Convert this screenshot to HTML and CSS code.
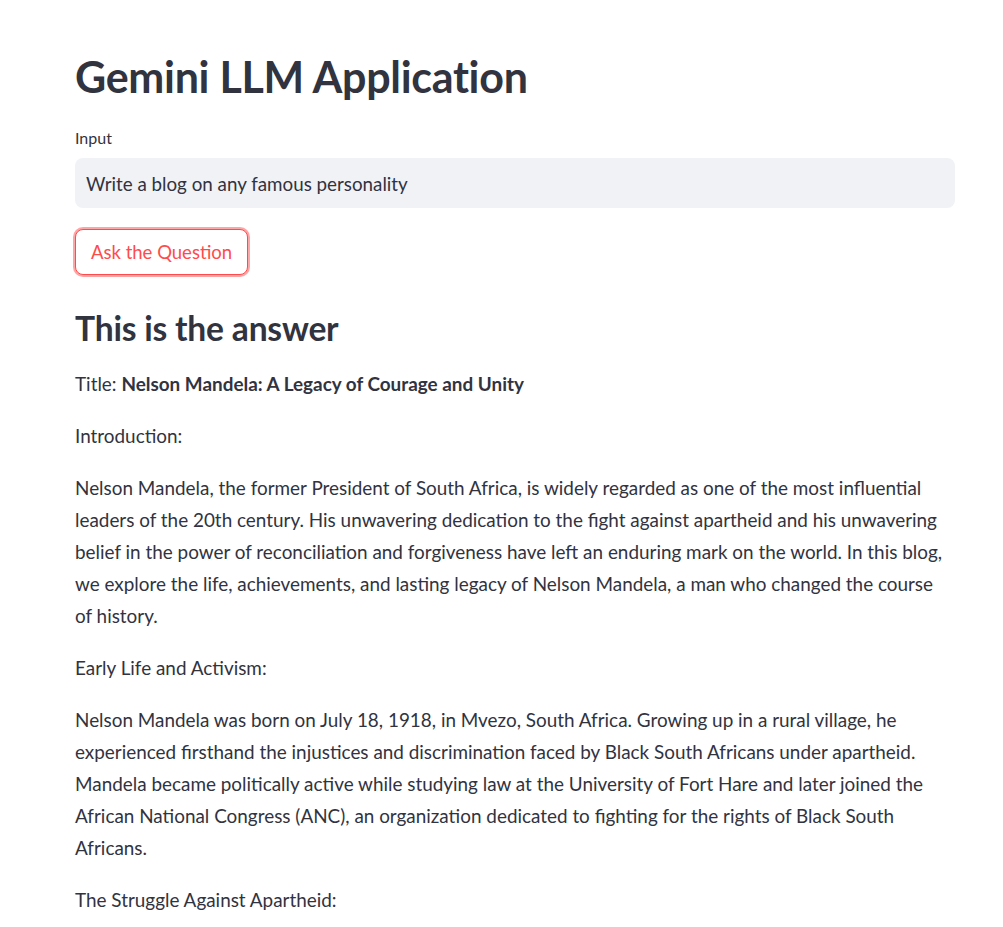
FILE: index.html
```html
<!DOCTYPE html>
<html lang="en">
<head>
<meta charset="utf-8">
<title>Gemini LLM Application</title>
<link rel="stylesheet" href="styles.css">
</head>
<body>
<main class="app">
  <h1 class="title">Gemini LLM Application</h1>
  <label class="field-label" for="q">Input</label>
  <div class="input-box"><input id="q" class="text-input" type="text" value="Write a blog on any famous personality"></div>
  <button class="btn" type="button">Ask the Question</button>
  <h2 class="subtitle">This is the answer</h2>
  <div class="answer">
    <p>Title: <strong>Nelson Mandela: A Legacy of Courage and Unity</strong></p>
    <p>Introduction:</p>
    <p>Nelson Mandela, the former President of South Africa, is widely regarded as one of the most influential leaders of the 20th century. His unwavering dedication to the fight against apartheid and his unwavering belief in the power of reconciliation and forgiveness have left an enduring mark on the world. In this blog, we explore the life, achievements, and lasting legacy of Nelson Mandela, a man who changed the course of history.</p>
    <p>Early Life and Activism:</p>
    <p>Nelson Mandela was born on July 18, 1918, in Mvezo, South Africa. Growing up in a rural village, he experienced firsthand the injustices and discrimination faced by Black South Africans under apartheid. Mandela became politically active while studying law at the University of Fort Hare and later joined the African National Congress (ANC), an organization dedicated to fighting for the rights of Black South Africans.</p>
    <p>The Struggle Against Apartheid:</p>
  </div>
</main>
</body>
</html>
```

FILE: styles.css
```css
html, body {
  margin: 0;
  padding: 0;
  background: #ffffff;
}
body {
  font-family: "Lato", "Liberation Sans", sans-serif;
  color: #31333f;
  overflow: hidden;
  height: 927px;
}
.app {
  width: 880px;
  margin-left: 75px;
  padding-top: 48px;
  display: flex;
  flex-direction: column;
  align-items: flex-start;
}
.title {
  margin: 0;
  font-size: 43px;
  line-height: 58px;
  font-weight: 700;
  letter-spacing: -0.3px;
}
.field-label {
  margin-top: 21px;
  font-size: 16px;
  line-height: 22px;
}
.input-box {
  margin-top: 9px;
  width: 100%;
  height: 50px;
  background: #f0f2f6;
  border-radius: 8px;
  display: flex;
  align-items: center;
  box-sizing: border-box;
  padding: 0 11px;
}
.text-input {
  border: 0;
  background: transparent;
  font: inherit;
  font-size: 18.8px;
  color: #31333f;
  width: 100%;
  padding: 0;
  outline: none;
}
.btn {
  margin-top: 21px;
  height: 46px;
  padding: 0 15px;
  background: #ffffff;
  border: 1px solid #ff4b4b;
  border-radius: 8px;
  box-shadow: 0 0 0 2px rgba(255, 75, 75, 0.5);
  color: #ff4b4b;
  font-family: inherit;
  font-size: 18.5px;
}
.subtitle {
  margin: 31px 0 0;
  font-size: 33.6px;
  line-height: 44px;
  font-weight: 700;
  letter-spacing: -0.2px;
}
.answer {
  margin-top: 18px;
  width: 100%;
}
.answer p {
  max-width: 876px;
  margin: 0 0 20px;
  font-size: 18.9px;
  line-height: 32px;
}
.answer strong {
  font-weight: 700;
}
```
